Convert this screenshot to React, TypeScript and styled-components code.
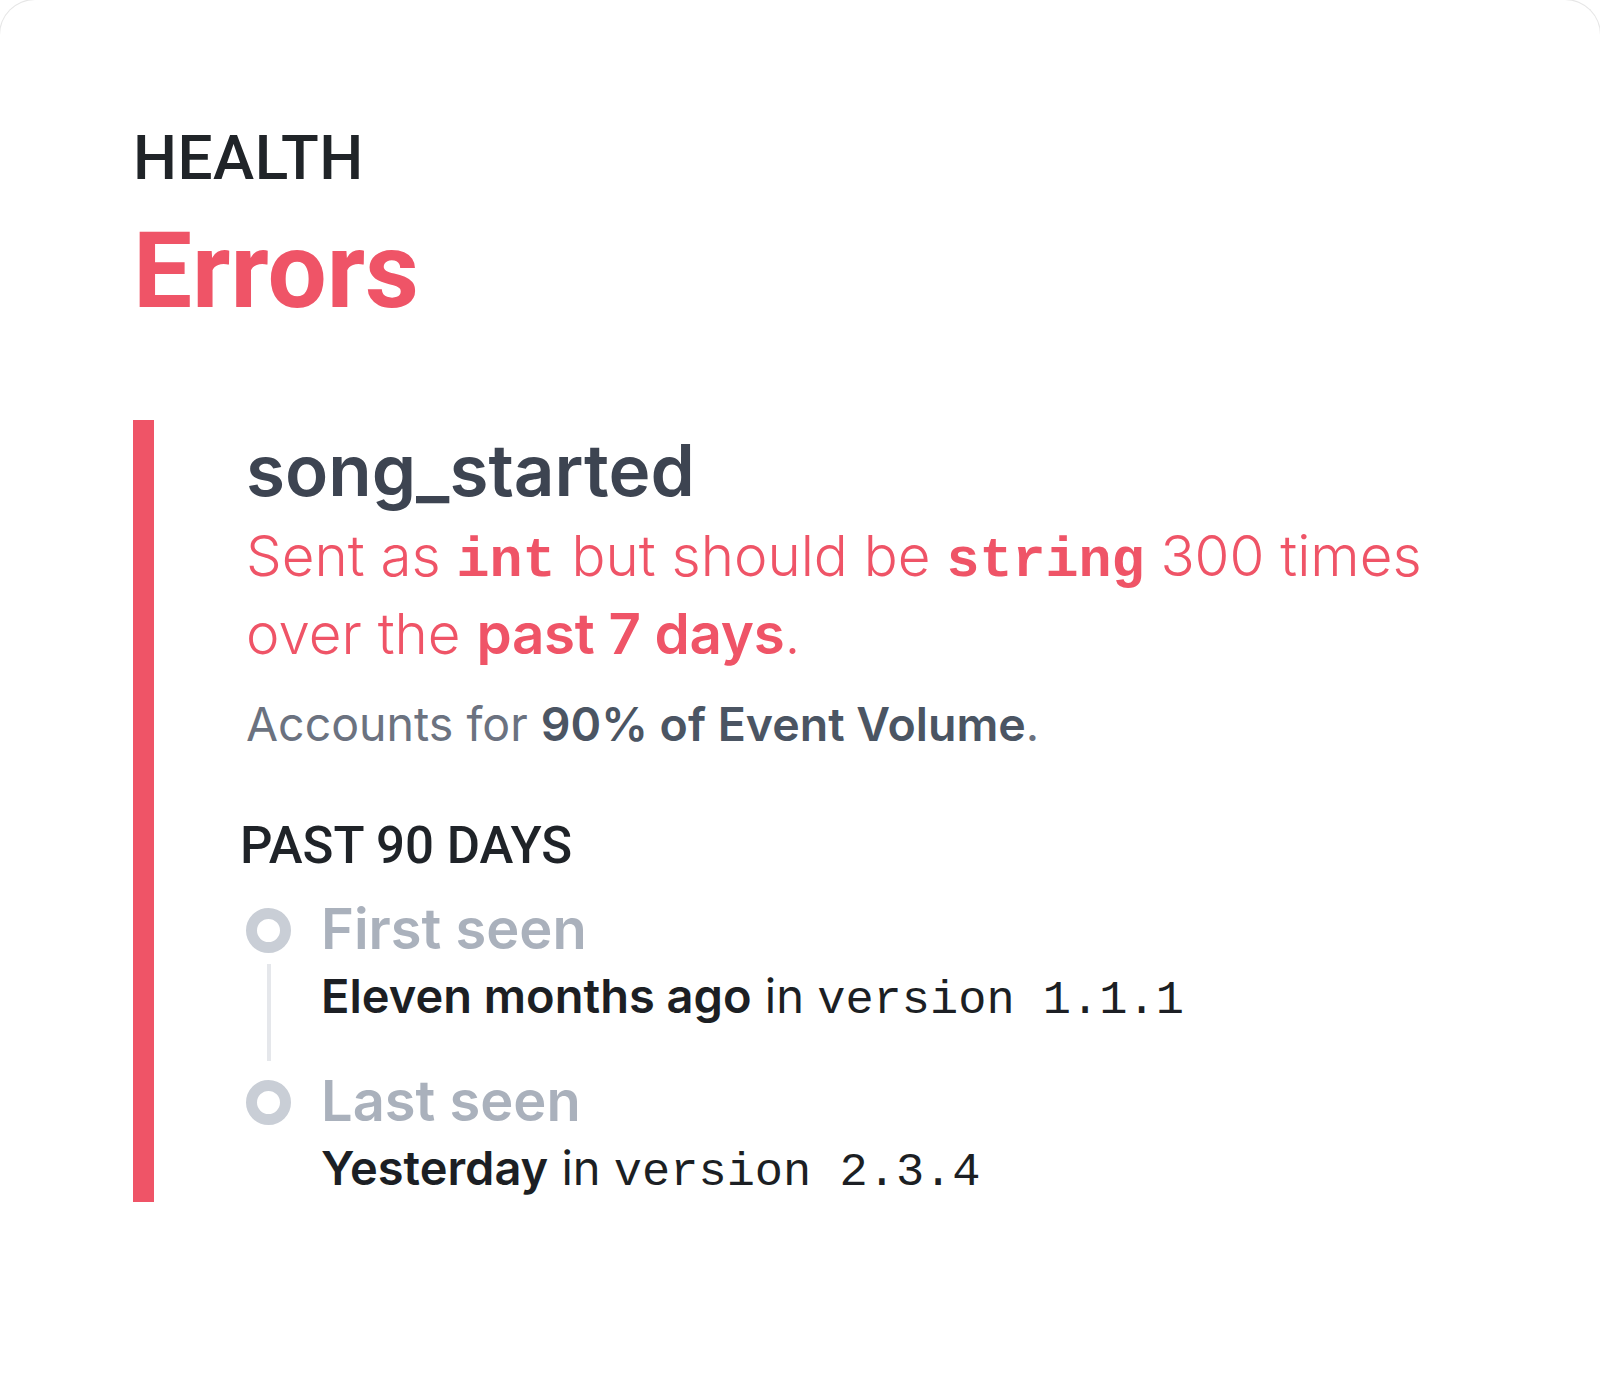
import React from "react";
import styled, { createGlobalStyle } from "styled-components";

const GlobalStyle = createGlobalStyle`
  html, body {
    margin: 0;
    padding: 0;
    background: #ffffff;
    overflow: hidden;
  }
`

const red = '#ef5467'

const Card = styled.div`
  box-sizing: border-box;
  width: 1602px;
  height: 1379px;
  margin: -1px -1px 0;
  border: 1px solid #e6e6e6;
  border-bottom: none;
  border-radius: 36px 36px 0 0;
  background: #ffffff;
  padding: 122px 133px 0 133px;
`

const Eyebrow = styled.div`
  font-family: Roboto, "Liberation Sans", sans-serif;
  font-weight: 500;
  font-size: 62px;
  line-height: 72px;
  letter-spacing: 0.5px;
  color: #202428;
`

const Title = styled.h1`
  margin: 23px 0 0;
  font-family: Roboto, "Liberation Sans", sans-serif;
  font-weight: 700;
  font-size: 105px;
  line-height: 110px;
  color: ${red};
`

const ErrorBlock = styled.section`
  margin-top: 93px;
  border-left: 21px solid ${red};
  padding: 10px 0 2px 92px;
`

const EventName = styled.div`
  font-family: Inter, "Liberation Sans", sans-serif;
  font-weight: 600;
  font-size: 71px;
  line-height: 80px;
  color: #3d4451;
`

const Message = styled.p`
  margin: 7px 0 0;
  font-family: Inter, "Liberation Sans", sans-serif;
  font-weight: 300;
  font-size: 56.5px;
  line-height: 78px;
  color: ${red};

  strong {
    font-weight: 600;
    letter-spacing: -0.3px;
  }
`

const Code = styled.code`
  font-family: "Liberation Mono", monospace;
  font-weight: 700;
  font-size: 55px;
  line-height: 1;
`

const Volume = styled.p`
  margin: 21px 0 0;
  font-family: Inter, "Liberation Sans", sans-serif;
  font-weight: 400;
  font-size: 46.5px;
  line-height: 60px;
  color: #6b7280;

  strong {
    font-weight: 600;
    color: #4b5563;
  }
`

const SectionLabel = styled.h3`
  margin: 62px 0 0 -6px;
  font-family: Roboto, "Liberation Sans", sans-serif;
  font-weight: 500;
  font-size: 51px;
  line-height: 60px;
  color: #1f2328;
`

const Timeline = styled.ol`
  list-style: none;
  margin: 23px 0 0;
  padding: 0;
`

const Item = styled.li<{ last?: boolean }>`
  display: grid;
  grid-template-columns: 45px 1fr;
  column-gap: 30px;
  padding-bottom: ${p => (p.last ? 0 : 43)}px;
`

const Marker = styled.div<{ last?: boolean }>`
  display: flex;
  flex-direction: column;
  align-items: center;
  margin-bottom: ${p => (p.last ? 0 : -43)}px;
`

const Dot = styled.span`
  box-sizing: border-box;
  width: 45px;
  height: 45px;
  margin-top: 9px;
  border-radius: 50%;
  border: 11px solid #c9ced6;
  flex-shrink: 0;
`

const Line = styled.span`
  flex: 1;
  width: 4px;
  margin: 11px 0 10px;
  background: #e5e7eb;
`

const Label = styled.div`
  font-family: Inter, "Liberation Sans", sans-serif;
  font-weight: 600;
  font-size: 56px;
  line-height: 60px;
  color: #aab1bc;
`

const Detail = styled.div`
  margin-top: 5px;
  font-family: Inter, "Liberation Sans", sans-serif;
  font-weight: 400;
  font-size: 47px;
  line-height: 64px;
  color: #1c1f24;

  strong {
    font-weight: 600;
  }
`

const Version = styled.code`
  font-family: "Liberation Mono", monospace;
  font-size: 47px;
  line-height: 1;
`

type Sighting = {
  label: string
  when: string
  version: string
}

const sightings: Sighting[] = [
  { label: 'First seen', when: 'Eleven months ago', version: '1.1.1' },
  { label: 'Last seen', when: 'Yesterday', version: '2.3.4' },
]

const App = () => {
  return (
    <>
      <GlobalStyle/>
      <Card>
        <Eyebrow>HEALTH</Eyebrow>
        <Title>Errors</Title>
        <ErrorBlock>
          <EventName>song_started</EventName>
          <Message>
            Sent as <Code>int</Code> but should be <Code>string</Code> 300 times over the <strong>past 7 days</strong>.
          </Message>
          <Volume>Accounts for <strong>90% of Event Volume</strong>.</Volume>
          <SectionLabel>PAST 90 DAYS</SectionLabel>
          <Timeline>
            {sightings.map((s, i) => {
              const last = i === sightings.length - 1
              return (
                <Item key={s.label} last={last}>
                  <Marker last={last}>
                    <Dot/>
                    {!last && <Line/>}
                  </Marker>
                  <div>
                    <Label>{s.label}</Label>
                    <Detail>
                      <strong>{s.when}</strong> in <Version>version {s.version}</Version>
                    </Detail>
                  </div>
                </Item>
              )
            })}
          </Timeline>
        </ErrorBlock>
      </Card>
    </>
  )
}

export default App
